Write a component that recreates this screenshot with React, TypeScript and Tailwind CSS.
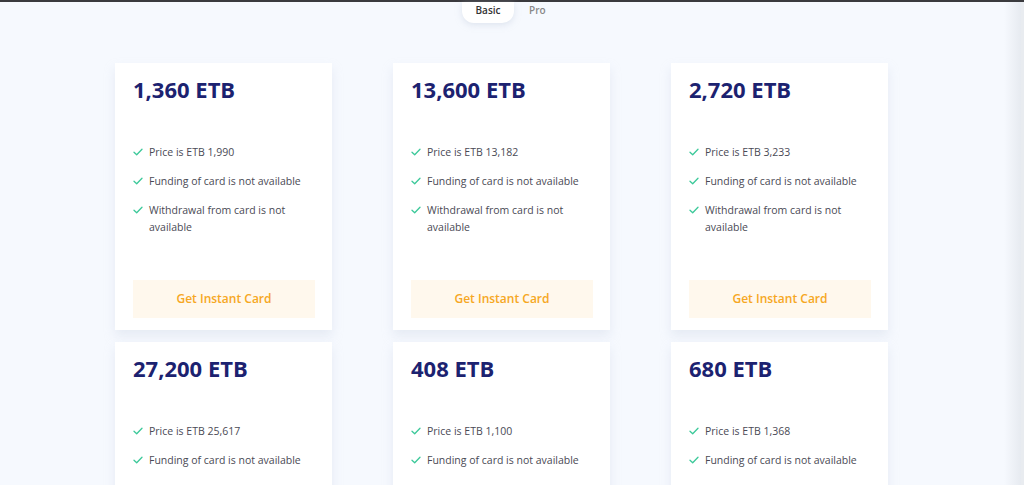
import React from "react";

const cards = [
  { amount: "1,360 ETB", price: "1,990" },
  { amount: "13,600 ETB", price: "13,182" },
  { amount: "2,720 ETB", price: "3,233" },
  { amount: "27,200 ETB", price: "25,617" },
  { amount: "408 ETB", price: "1,100" },
  { amount: "680 ETB", price: "1,368" },
];

function Check() {
  return (
    <svg width="10" height="8" viewBox="0 0 10 8" className="mt-[4px] shrink-0">
      <path d="M1 4.2 L3.7 6.8 L9 1.2" fill="none" stroke="#3cc99a" strokeWidth="1.3" strokeLinecap="round" strokeLinejoin="round" />
    </svg>
  );
}

function Feature({ children }: { children: React.ReactNode }) {
  return (
    <li className="flex gap-[6px] text-[10.5px] leading-[17px] text-[#4a4a55]">
      <Check />
      <span>{children}</span>
    </li>
  );
}

function Card({ amount, price }: { amount: string; price: string }) {
  return (
    <div className="flex h-[267px] w-[217px] flex-col bg-white px-[18px] pt-[11px] pb-[12px] shadow-[0_6px_10px_rgba(200,210,225,0.35)]">
      <div className="text-[22px] font-bold leading-[30px] text-[#1c2270]">{amount}</div>
      <ul className="mt-[40px] flex flex-col gap-[12px]">
        <Feature>Price is ETB {price}</Feature>
        <Feature>Funding of card is not available</Feature>
        <Feature>Withdrawal from card is not available</Feature>
      </ul>
      <div className="mt-auto flex h-[38px] w-[182px] items-center justify-center bg-[#fff8ed] text-[12px] font-semibold text-[#f6a723]">
        Get Instant Card
      </div>
    </div>
  );
}

export default function App() {
  return (
    <div
      className="relative h-[485px] w-[1024px] overflow-hidden bg-[#f6f9fe]"
      style={{ fontFamily: '"Open Sans", "Noto Sans", sans-serif' }}
    >
      <div className="h-[2px] w-full bg-[#3a3a3e]" />
      <div className="ml-[462px] flex gap-[15px]">
        <div className="flex h-[21px] w-[52px] items-start justify-center rounded-b-[12px] bg-white pt-[1px] text-[10px] font-semibold text-[#333] shadow-[0_2px_6px_rgba(200,210,225,0.5)]">
          Basic
        </div>
        <div className="pt-[1px] text-[10px] font-semibold text-[#888]">Pro</div>
      </div>
      <div className="ml-[115px] mt-[40px] grid w-[773px] grid-cols-[217px_217px_217px] gap-x-[61px] gap-y-[12px]">
        {cards.map((c) => (
          <Card key={c.amount} {...c} />
        ))}
      </div>
      <div className="absolute right-0 top-[2px] h-[483px] w-[20px] bg-gradient-to-r from-transparent to-[#e4e8ee]" />
      <div className="absolute right-0 top-[2px] h-[483px] w-[3px] bg-[#e9ecf0]" />
    </div>
  );
}
